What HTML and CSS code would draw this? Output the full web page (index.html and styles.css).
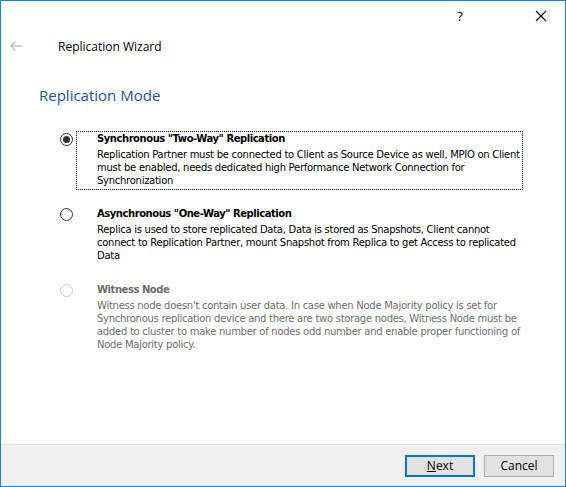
FILE: index.html
```html
<!DOCTYPE html>
<html lang="en">
<head>
    <meta charset="UTF-8">
    <title>Replication Wizard</title>
    <link rel="stylesheet" href="styles.css">
</head>
<body>
    <div class="window">
        <div class="titlebar">
            <span class="help">?</span>
            <svg class="close" width="12" height="12" viewBox="0 0 12 12">
                <path d="M1 1 L11 11 M11 1 L1 11" stroke="#000" stroke-width="1.1" fill="none"/>
            </svg>
        </div>
        <div class="header">
            <svg class="back" width="14" height="12" viewBox="0 0 14 12">
                <path d="M13 6 H2 M6.5 1.5 L2 6 L6.5 10.5" stroke="#c4c4c4" stroke-width="1.6" fill="none"/>
            </svg>
            <span class="wizard-title">Replication Wizard</span>
        </div>
        <h1 class="page-title">Replication Mode</h1>

        <div class="options">
            <div class="option">
                <span class="radio checked"></span>
                <div class="option-body focused">
                    <div class="option-title">Synchronous "Two-Way" Replication</div>
                    <div class="option-text">Replication Partner must be connected to Client as Source Device as well, MPIO on Client must be enabled, needs dedicated high Performance Network Connection for Synchronization</div>
                </div>
            </div>
            <div class="option">
                <span class="radio"></span>
                <div class="option-body">
                    <div class="option-title">Asynchronous "One-Way" Replication</div>
                    <div class="option-text">Replica is used to store replicated Data, Data is stored as Snapshots, Client cannot connect to Replication Partner, mount Snapshot from Replica to get Access to replicated Data</div>
                </div>
            </div>
            <div class="option disabled">
                <span class="radio"></span>
                <div class="option-body">
                    <div class="option-title">Witness Node</div>
                    <div class="option-text">Witness node doesn't contain user data. In case when Node Majority policy is set for Synchronous replication device and there are two storage nodes, Witness Node must be added to cluster to make number of nodes odd number and enable proper functioning of Node Majority policy.</div>
                </div>
            </div>
        </div>

        <div class="footer">
            <button class="btn default"><u>N</u>ext</button>
            <button class="btn">Cancel</button>
        </div>
    </div>
</body>
</html>
```

FILE: styles.css
```css
html, body {
    margin: 0;
    padding: 0;
}
body {
    width: 566px;
    height: 487px;
    background: #ffffff;
    font-family: "DejaVu Sans", Verdana, sans-serif;
}
.window {
    box-sizing: border-box;
    width: 566px;
    height: 487px;
    border: 1px solid #1883d7;
    display: flex;
    flex-direction: column;
    background: #ffffff;
}
.titlebar {
    height: 30px;
    display: flex;
    justify-content: flex-end;
    align-items: center;
}
.help {
    font-family: "Open Sans", sans-serif;
    font-size: 13px;
    color: #000;
    width: 20px;
    margin-right: 65px;
    text-align: center;
}
.close {
    margin-right: 18px;
}
.header {
    height: 30px;
    display: flex;
    align-items: center;
}
.back {
    margin-left: 8px;
    margin-right: 35px;
}
.wizard-title {
    font-family: "Open Sans", sans-serif;
    font-size: 12px;
    color: #000;
}
.page-title {
    margin: 24px 0 0 38px;
    font-family: "Open Sans", sans-serif;
    font-weight: normal;
    font-size: 15px;
    color: #1e4fb6;
}
.options {
    margin-top: 27px;
    display: flex;
    flex-direction: column;
    gap: 20px;
    flex: 1;
}
.option {
    display: flex;
    align-items: flex-start;
}
.radio {
    box-sizing: border-box;
    width: 13px;
    height: 13px;
    margin: 1px 0 0 59px;
    border: 1px solid #333;
    border-radius: 50%;
    background: #fff;
    position: relative;
    flex: none;
}
.radio.checked::after {
    content: "";
    position: absolute;
    left: 2px;
    top: 2px;
    width: 7px;
    height: 7px;
    border-radius: 50%;
    background: #333;
}
.option-body {
    margin-left: 3px;
    padding: 0 0 0 20px;
    width: 425px;
    border: 1px dotted transparent;
    border-top: none;
}
.option-body.focused {
    border: 1px dotted #000;
    margin-top: -1px;
    margin-bottom: -3px;
    padding-bottom: 2px;
}
.option-title {
    font-weight: bold;
    font-size: 10px;
    letter-spacing: -0.45px;
    line-height: 14px;
    color: #000;
    margin-bottom: 2px;
}
.option-text {
    font-size: 10px;
    letter-spacing: -0.27px;
    line-height: 13px;
    color: #000;
}
.disabled .radio {
    border-color: #cccccc;
}
.disabled .option-title,
.disabled .option-text {
    color: #6d6d6d;
}
.footer {
    height: 41px;
    background: #f0f0f0;
    border-top: 1px solid #dfdfdf;
    display: flex;
    justify-content: flex-end;
    align-items: center;
    gap: 9px;
    padding-right: 11px;
}
.btn {
    box-sizing: border-box;
    width: 70px;
    height: 22px;
    background: #e1e1e1;
    border: 1px solid #adadad;
    font-family: "Open Sans", sans-serif;
    font-size: 12px;
    color: #000;
    padding: 0;
}
.btn.default {
    border: 2px solid #0078d7;
}
```
